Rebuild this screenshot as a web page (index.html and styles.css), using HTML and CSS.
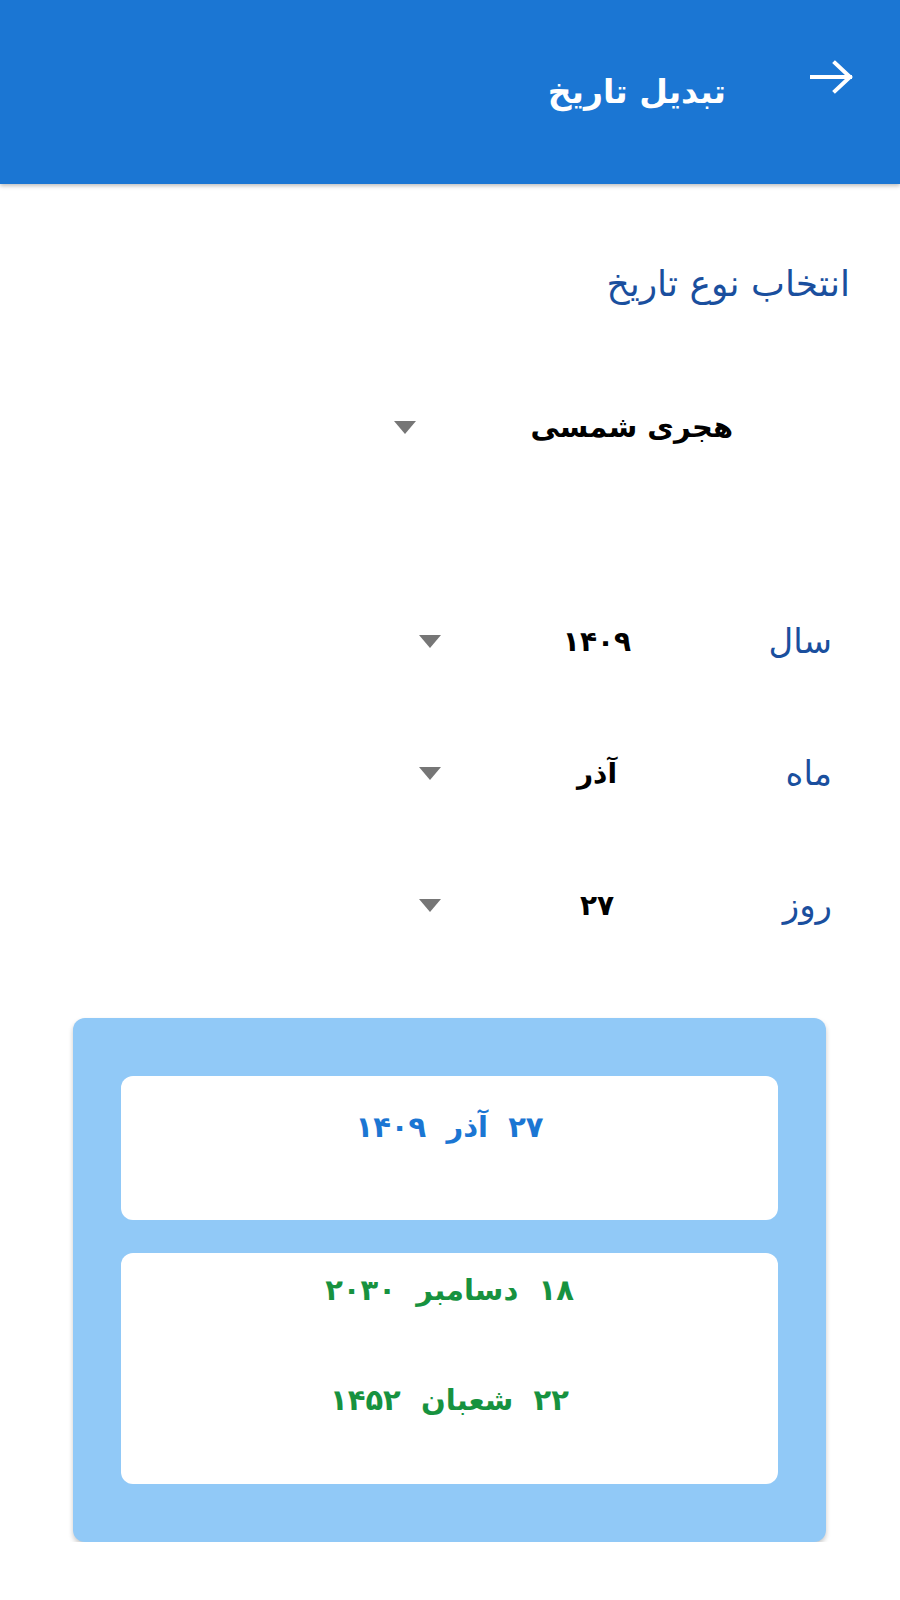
FILE: index.html
```html
<!DOCTYPE html>
<html lang="fa" dir="rtl">
<head>
<meta charset="utf-8">
<title>تبدیل تاریخ</title>
<link rel="stylesheet" href="styles.css">
</head>
<body>
<header class="appbar">
  <svg class="back" width="44" height="34" viewBox="0 0 44 34" aria-hidden="true">
    <path d="M2 17H40M25 3L40 17L25 31" fill="none" stroke="#fff" stroke-width="4" stroke-linecap="square"/>
  </svg>
  <h1 class="title">تبدیل تاریخ</h1>
</header>
<main class="content">
  <div class="type-label">انتخاب نوع تاریخ</div>
  <div class="dropdown">
    <span class="dd-text">هجری شمسی</span>
    <span class="tri"></span>
  </div>
  <div class="rows">
    <div class="row">
      <span class="row-label">سال</span>
      <span class="row-value">۱۴۰۹</span>
      <span class="row-tri"><span class="tri"></span></span>
    </div>
    <div class="row">
      <span class="row-label">ماه</span>
      <span class="row-value">آذر</span>
      <span class="row-tri"><span class="tri"></span></span>
    </div>
    <div class="row">
      <span class="row-label">روز</span>
      <span class="row-value">۲۷</span>
      <span class="row-tri"><span class="tri"></span></span>
    </div>
  </div>
  <section class="result">
    <div class="res-card res-first">
      <div class="res-line blue">۲۷ &nbsp;آذر&nbsp; ۱۴۰۹</div>
    </div>
    <div class="res-card res-second">
      <div class="res-line green">۱۸ &nbsp;دسامبر&nbsp; ۲۰۳۰</div>
      <div class="res-line green second">۲۲ &nbsp;شعبان&nbsp; ۱۴۵۲</div>
    </div>
  </section>
</main>
</body>
</html>
```

FILE: styles.css
```css
html, body {
  margin: 0;
  padding: 0;
  background: #ffffff;
}
body {
  width: 900px;
  font-family: "DejaVu Sans", "Noto Sans", sans-serif;
  direction: rtl;
}
.appbar {
  height: 184px;
  background: #1b76d3;
  display: flex;
  align-items: flex-start;
  padding-right: 46px;
  box-shadow: 0 2px 4px rgba(0,0,0,0.25);
  position: relative;
  z-index: 1;
}
.back {
  margin-top: 60px;
  flex: none;
}
.title {
  margin: 62px 84px 0 0;
  color: #ffffff;
  font-size: 33px;
  font-weight: bold;
  line-height: 60px;
}
.content {
  display: flex;
  flex-direction: column;
}
.type-label {
  margin-top: 70px;
  padding-right: 50px;
  height: 60px;
  line-height: 60px;
  font-size: 36px;
  color: #1a4f9e;
}
.dropdown {
  margin-top: 83px;
  margin-right: 167px;
  width: 339px;
  height: 60px;
  display: flex;
  justify-content: space-between;
  align-items: center;
}
.dd-text {
  font-size: 29px;
  font-weight: bold;
  color: #000;
}
.tri {
  display: block;
  width: 0;
  height: 0;
  border-left: 11px solid transparent;
  border-right: 11px solid transparent;
  border-top: 13px solid #767676;
}
.rows {
  margin-top: 154px;
  display: flex;
  flex-direction: column;
  gap: 72px;
  padding-right: 68px;
}
.row {
  display: grid;
  grid-template-columns: 150px 170px 93px;
  height: 60px;
  align-items: center;
}
.row-label {
  font-size: 34px;
  color: #1a4f9e;
}
.row-value {
  text-align: center;
  font-size: 28px;
  font-weight: bold;
  color: #000;
}
.row-tri {
  display: flex;
  justify-content: flex-end;
}
.result {
  margin: 83px 74px 0 0;
  width: 753px;
  box-sizing: border-box;
  background: #91c9f7;
  border-radius: 12px;
  padding: 58px 48px;
  display: flex;
  flex-direction: column;
  gap: 33px;
  box-shadow: 0 3px 5px rgba(0,0,0,0.22);
}
.res-card {
  background: #ffffff;
  border-radius: 12px;
  display: flex;
  flex-direction: column;
  align-items: center;
}
.res-first {
  height: 144px;
  padding-top: 21px;
  box-sizing: border-box;
}
.res-second {
  height: 231px;
  padding-top: 7px;
  box-sizing: border-box;
}
.res-line {
  height: 60px;
  line-height: 60px;
  font-size: 29px;
  font-weight: bold;
}
.res-line.second {
  margin-top: 50px;
}
.blue { color: #1b76d3; }
.green { color: #17923f; }
```
